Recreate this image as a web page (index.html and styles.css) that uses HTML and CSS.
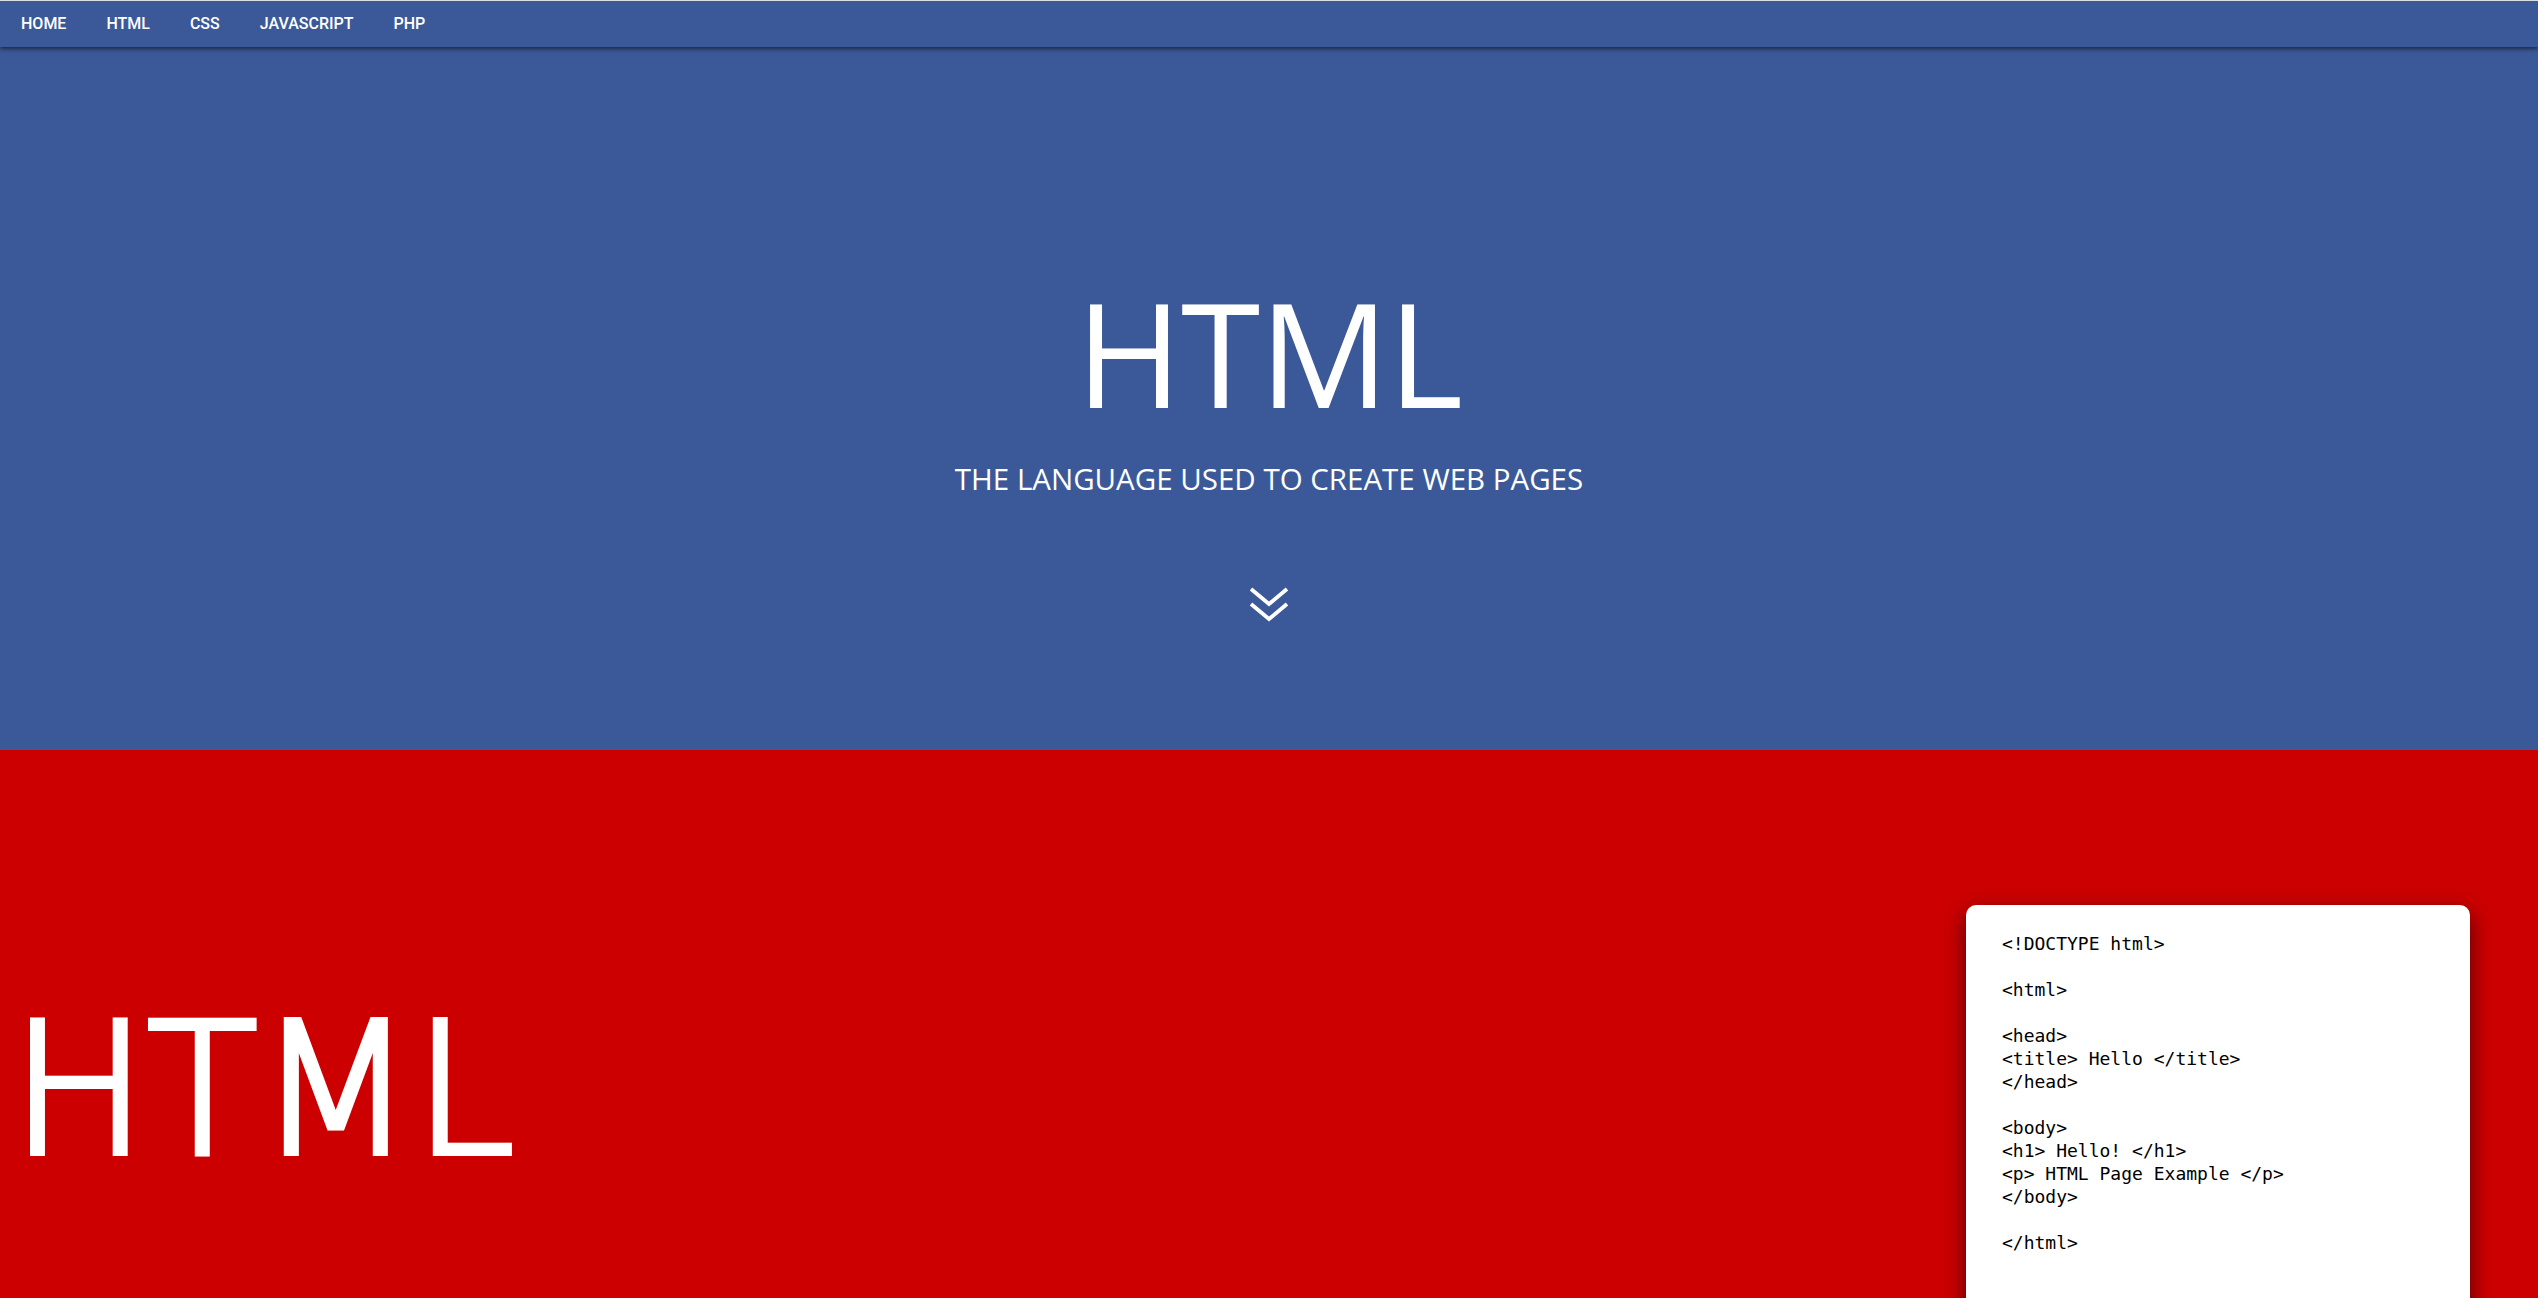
FILE: index.html
```html
<!DOCTYPE html>
<html lang="en">
<head>
<meta charset="utf-8">
<title>HTML</title>
<link rel="stylesheet" href="styles.css">
</head>
<body>
<nav class="topnav">
  <a class="nav-link" href="#">HOME</a>
  <a class="nav-link" href="#">HTML</a>
  <a class="nav-link" href="#">CSS</a>
  <a class="nav-link" href="#">JAVASCRIPT</a>
  <a class="nav-link" href="#">PHP</a>
</nav>
<header class="hero">
  <h1 class="hero-title">HTML</h1>
  <p class="hero-sub">THE LANGUAGE USED TO CREATE WEB PAGES</p>
  <svg class="chevrons" width="40" height="38" viewBox="0 0 40 38" aria-hidden="true">
    <polyline points="2,3 20,18 38,3" fill="none" stroke="#fff" stroke-width="3.8"/>
    <polyline points="2,18 20,33 38,18" fill="none" stroke="#fff" stroke-width="3.8"/>
  </svg>
</header>
<section class="intro">
  <h2 class="intro-title">HTML</h2>
  <div class="code-card">
<pre class="code">&lt;!DOCTYPE html&gt;

&lt;html&gt;

&lt;head&gt;
&lt;title&gt; Hello &lt;/title&gt;
&lt;/head&gt;

&lt;body&gt;
&lt;h1&gt; Hello! &lt;/h1&gt;
&lt;p&gt; HTML Page Example &lt;/p&gt;
&lt;/body&gt;

&lt;/html&gt;</pre>
  </div>
</section>
</body>
</html>
```
FILE: styles.css
```css
html, body {
  margin: 0;
  padding: 0;
}
body {
  overflow: hidden;
  background: #cc0000;
  font-family: "Open Sans", sans-serif;
  border-top: 1px solid #d9dde6;
}
.topnav {
  position: relative;
  z-index: 2;
  display: flex;
  align-items: center;
  height: 46px;
  padding-left: 1px;
  background: #3b5998;
  box-shadow: 0 2px 4px rgba(0, 0, 0, 0.55);
}
.nav-link {
  padding: 0 20px;
  color: #fff;
  text-decoration: none;
  font-family: Roboto, sans-serif;
  font-weight: 500;
  font-size: 16px;
  line-height: 46px;
}
.hero {
  display: flex;
  flex-direction: column;
  align-items: center;
  height: 703px;
  background: #3b5998;
  color: #fff;
}
.hero-title {
  margin: 230px 0 0;
  font-family: "Open Sans", sans-serif;
  font-weight: 400;
  font-size: 144px;
  line-height: 150px;
  letter-spacing: -1px;
}
.hero-sub {
  margin: 34px 0 0;
  font-family: "Open Sans", sans-serif;
  font-weight: 400;
  font-size: 29.5px;
  line-height: 36px;
}
.chevrons {
  display: block;
  margin-top: 89px;
}
.intro {
  display: flex;
  justify-content: space-between;
  align-items: flex-start;
  padding: 155px 68px 0 11px;
  background: #cc0000;
  color: #fff;
}
.intro-title {
  margin: 86px 0 0;
  font-family: "DejaVu Sans", sans-serif;
  font-weight: 200;
  font-size: 181px;
  line-height: 200px;
  -webkit-text-stroke: 6px #fff;
}
.code-card {
  width: 468px;
  min-height: 520px;
  padding: 27px 0 40px 36px;
  background: #fff;
  border-radius: 10px;
  box-shadow: 0 8px 22px rgba(0, 0, 0, 0.6);
}
.code {
  margin: 0;
  font-family: "DejaVu Sans Mono", monospace;
  font-size: 18px;
  line-height: 23px;
  color: #000;
}
```
